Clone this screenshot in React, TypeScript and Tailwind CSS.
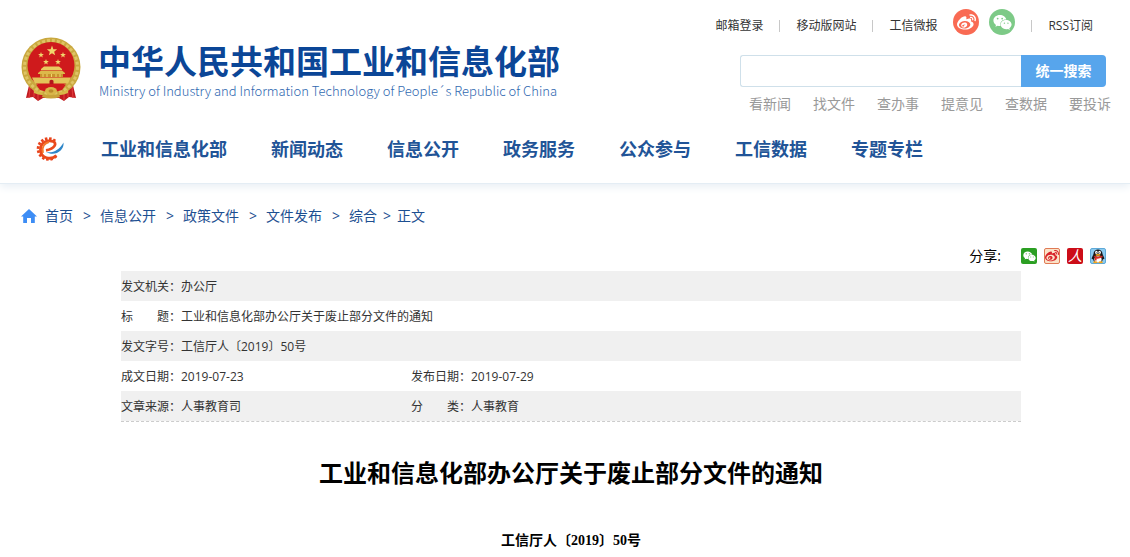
import React from 'react';
import { FaWeibo, FaWeixin } from 'react-icons/fa';

const navItems = ['工业和信息化部', '新闻动态', '信息公开', '政务服务', '公众参与', '工信数据', '专题专栏'];
const quickLinks = ['看新闻', '找文件', '查办事', '提意见', '查数据', '要投诉'];
const crumbs = ['首页', '信息公开', '政策文件', '文件发布', '综合'];

const metaRows = [
  [['发文机关：', '办公厅']],
  [['标　　题：', '工业和信息化部办公厅关于废止部分文件的通知']],
  [['发文字号：', '工信厅人〔2019〕50号']],
  [['成文日期：', '2019-07-23'], ['发布日期：', '2019-07-29']],
  [['文章来源：', '人事教育司'], ['分　　类：', '人事教育']],
];

const starPoints = (cx: number, cy: number, r: number) =>
  Array.from({ length: 10 }, (_, i) => {
    const a = (Math.PI / 5) * i - Math.PI / 2;
    const d = i % 2 === 0 ? r : r * 0.42;
    return `${(cx + d * Math.cos(a)).toFixed(2)},${(cy + d * Math.sin(a)).toFixed(2)}`;
  }).join(' ');

const Emblem = () => (
  <svg viewBox="0 0 60 66" className="h-[66px] w-[60px] shrink-0" aria-hidden="true">
    <path d="M9 44 L5 61 L12 60 L17 64 L22 61 H38 L43 64 L48 60 L55 61 L51 44 Z" fill="#c01a20" />
    <path d="M9 50 L8 61 M13 52 L13 60 M17 54 L17 63 M43 54 L43 63 M47 52 L47 60 M51 50 L52 61" stroke="#e0393a" strokeWidth="1.2" />
    <circle cx="30" cy="30" r="29.5" fill="#c9a83f" />
    <circle cx="30" cy="30" r="26.500" fill="none" stroke="#dfc465" strokeWidth="3" strokeDasharray="3 2" />
    <circle cx="30" cy="28.500" r="23.500" fill="#cf1a1c" />
    <polygon points={starPoints(31, 14, 5.4)} fill="#f1d56c" />
    <polygon points={starPoints(20, 18, 3)} fill="#f1d56c" />
    <polygon points={starPoints(42, 18, 3)} fill="#f1d56c" />
    <polygon points={starPoints(25, 25, 3)} fill="#f1d56c" />
    <polygon points={starPoints(37, 25, 3)} fill="#f1d56c" />
    <path d="M20 32 L23 29.5 H38 L41 32 V33 H20 Z" fill="#e8ca60" />
    <path d="M17 36 L20 33.6 H41 L44 36 V37 H17 Z" fill="#dcb94a" />
    <rect x="19" y="37" width="23" height="3" fill="#c8932c" />
    <path d="M22 37 V40 M26 37 V40 M30.500 37 V40 M35 37 V40 M39 37 V40" stroke="#f1d56c" strokeWidth="1" />
    <path d="M11 40.500 H50 L47 46.500 H14 Z" fill="#e3c459" />
    <path d="M28.500 47 V43.800 Q30.500 41.500 32.500 43.800 V47 Z" fill="#b3161b" />
    <path d="M15 47.500 Q30 52 45 47.500 L41 53 Q30 57 19 53 Z" fill="#cf1a1c" />
    <ellipse cx="30" cy="54" rx="6" ry="4" fill="#d8b649" />
    <ellipse cx="30" cy="54" rx="2.500" ry="1.800" fill="#b98a2c" />
    <path d="M21 55 Q16 55 13 52 V56 Q17 58 22 58 Z M39 55 Q44 55 47 52 V56 Q43 58 38 58 Z" fill="#d8b649" />
    <path d="M22 57 Q30 60 38 57 L39 60 Q30 63 21 60 Z" fill="#c9a23a" />
  </svg>
);

// teeth run clockwise from the lower right round to the upper right
const teeth = Array.from({ length: 12 }, (_, i) => 50 + i * 23);

const GearLogo = () => (
  <svg viewBox="0 0 30 26" className="h-[26px] w-[30px]" aria-hidden="true">
    {teeth.map(deg => (
      <rect key={deg} x="22.500" y="11.700" width="2.800" height="2.600" fill="#e8431c" transform={`rotate(${deg} 13.500 13)`} />
    ))}
    <path
      d="M21.500 19.500 C16 24.500 5.500 22.500 5.500 13.500 C5.500 6 13 3.800 17.800 5.300 C22.500 7 20 12.800 11 14.300"
      fill="none"
      stroke="#ea4a1b"
      strokeWidth="2.800"
    />
    <path d="M8 17 C6.500 11 9.500 7 14 6" fill="none" stroke="#f47a2b" strokeWidth="1.800" />
    <path d="M11 16 C17.500 17.600 24.500 14 28.500 6.500 C29.500 14.800 19.500 21 11 16 Z" fill="#2e86c8" />
  </svg>
);

const HomeIcon = () => (
  <svg viewBox="0 0 16 14" className="h-[14px] w-4" aria-hidden="true">
    <path d="M8 0 L16 7.600 H13.800 V14 H10 V9 H6 V14 H2.200 V7.600 H0 Z" fill="#3d8df5" />
  </svg>
);

const Penguin = () => (
  <svg viewBox="0 0 16 16" className="size-4" aria-hidden="true">
    <rect x="0.500" y="0.500" width="15" height="15" rx="1.500" fill="#8ccbf0" stroke="#5ea9d8" />
    <path d="M3.500 6 C3.500 0 12.500 0 12.500 6 L14.500 10.500 L12.800 11.500 C12.500 16 3.500 16 3.200 11.500 L1.500 10.500 Z" fill="#17171b" />
    <ellipse cx="8" cy="11.500" rx="3.600" ry="3.200" fill="#fff" />
    <ellipse cx="6.400" cy="4.400" rx="1.300" ry="1.600" fill="#fff" />
    <ellipse cx="9.600" cy="4.400" rx="1.300" ry="1.600" fill="#fff" />
    <circle cx="6.800" cy="4.700" r="0.500" fill="#111" />
    <circle cx="9.200" cy="4.700" r="0.500" fill="#111" />
    <ellipse cx="8" cy="6.900" rx="2.600" ry="0.900" fill="#f6a71b" />
    <path d="M3.500 7.600 Q8 9.800 12.500 7.600 V9.200 Q8 11.200 6.600 10.400 V12.500 H4.800 V9.600 Z" fill="#dd2a22" />
    <ellipse cx="5.300" cy="14.300" rx="2.200" ry="1" fill="#f6a71b" />
    <ellipse cx="10.700" cy="14.300" rx="2.200" ry="1" fill="#f6a71b" />
  </svg>
);

const Divider = () => <span className="h-3 w-px bg-[#c8c8c8]" />;

const TopLinks = () => (
  <div className="flex h-[26px] items-center gap-4 pr-[37px] text-xs text-[#333]">
    <a href="#mail">邮箱登录</a>
    <Divider />
    <a href="#mobile">移动版网站</a>
    <Divider />
    <a href="#weibao">工信微报</a>
    <div className="-mt-1 flex items-center gap-[10px] self-start">
      <a href="#weibo" aria-label="微博" className="flex size-[26px] items-center justify-center rounded-full bg-[#f96a53] text-white">
        <FaWeibo size={19} />
      </a>
      <a href="#weixin" aria-label="微信" className="flex size-[26px] items-center justify-center rounded-full bg-[#7dca87] text-white">
        <FaWeixin size={19} />
      </a>
    </div>
    <Divider />
    <a href="#rss">RSS订阅</a>
  </div>
);

const SearchBox = () => (
  <form className="flex h-8 w-[366px]" onSubmit={e => e.preventDefault()}>
    <input
      type="text"
      aria-label="搜索"
      className="min-w-0 flex-1 rounded-l-[3px] border border-r-0 border-[#cfe0ea] bg-white px-2 text-sm outline-none"
    />
    <button type="submit" className="w-[85px] rounded-r-[4px] bg-[#57a5ec] text-sm font-bold text-white">
      统一搜索
    </button>
  </form>
);

const Header = () => (
  <header className="border-b border-[#e4edf4] shadow-[0_3px_8px_#e9eff5]">
    <div className="flex items-start justify-between pl-[21px]">
      <a href="#home" className="flex items-start gap-[17px] pt-[37px]">
        <Emblem />
        <div className="pt-1">
          <div className="text-[33px] leading-[42px] font-bold whitespace-nowrap text-[#0b4697]">中华人民共和国工业和信息化部</div>
          <div className="pl-px font-[family-name:'Noto_Sans_CJK_SC',sans-serif] text-[13px] leading-4 font-light whitespace-nowrap text-[#2f68b0]">
            Ministry of Industry and Information Technology of People´s Republic of China
          </div>
        </div>
      </a>
      <div className="flex shrink-0 flex-col items-end pt-[13px]">
        <TopLinks />
        <div className="w-[390px] pt-4">
          <SearchBox />
          <div className="flex gap-[22px] pt-[7px] pl-[9px] text-sm whitespace-nowrap text-[#999]">
            {quickLinks.map(link => (
              <a key={link} href="#quick">{link}</a>
            ))}
          </div>
        </div>
      </div>
    </div>
    <nav className="flex items-center pt-[21px] pb-[20px] pl-[35px]">
      <a href="#logo" aria-label="首页" className="mr-9"><GearLogo /></a>
      <div className="flex gap-[44px] text-lg font-bold whitespace-nowrap text-[#215497]">
        {navItems.map(item => (
          <a key={item} href="#nav">{item}</a>
        ))}
      </div>
    </nav>
  </header>
);

const Breadcrumb = () => (
  <nav aria-label="当前位置" className="flex items-center pl-[21px] text-sm text-[#1d4f91]">
    <HomeIcon />
    <div className="flex pl-2">
      {crumbs.map((crumb, i) => (
        <React.Fragment key={crumb}>
          <a href="#crumb">{crumb}</a>
          <span className={i === crumbs.length - 1 ? 'px-[6px]' : 'pr-[9px] pl-[10px]'}>&gt;</span>
        </React.Fragment>
      ))}
      <span>正文</span>
    </div>
  </nav>
);

const Share = () => (
  <div className="flex items-center justify-end pr-6 text-sm text-black">
    <span>分享:</span>
    <div className="flex gap-[7px] pl-5">
      <a href="#share-weixin" aria-label="微信" className="flex size-4 items-center justify-center rounded-[2px] bg-[#2b9f23] text-white">
        <FaWeixin size={13} />
      </a>
      <a href="#share-weibo" aria-label="新浪微博" className="flex size-4 items-center justify-center rounded-[2px] border border-[#e07a55] bg-[#fbe3c8] text-[#d8232a]">
        <FaWeibo size={14} />
      </a>
      <a href="#share-people" className="flex size-4 items-center justify-center rounded-[2px] bg-[#cc0d18] text-sm text-white italic">人</a>
      <a href="#share-qq" aria-label="QQ"><Penguin /></a>
    </div>
  </div>
);

const MetaTable = () => (
  <div className="border-b border-dashed border-[#ccc]">
    <table className="w-full table-fixed text-left text-xs text-[#333]">
      <colgroup>
        <col className="w-[60px]" />
        <col className="w-[230px]" />
        <col className="w-[60px]" />
        <col />
      </colgroup>
      <tbody>
        {metaRows.map(row => (
          <tr key={row[0][0]} className="h-[30px] odd:bg-[#f0f0f0]">
            {row.map(([label, value]) => (
              <React.Fragment key={label}>
                <th scope="row" className="pt-[2px] font-normal whitespace-nowrap">{label}</th>
                <td colSpan={row.length === 1 ? 3 : 1} className="pt-[2px] whitespace-nowrap">{value}</td>
              </React.Fragment>
            ))}
          </tr>
        ))}
      </tbody>
    </table>
  </div>
);

export default function App() {
  return (
    <div lang="zh-CN" className="min-h-screen bg-white font-[family-name:'Open_Sans','Noto_Sans_CJK_SC',sans-serif]">
      <Header />
      <main className="pt-[22px]">
        <Breadcrumb />
        <div className="pt-5">
          <Share />
        </div>
        <div className="pt-[5px] pr-[9px] pl-[21px]">
          <article className="mx-auto max-w-[900px]">
            <MetaTable />
            <h1 className="pt-[35px] text-center text-2xl leading-8 font-bold text-black">
              工业和信息化部办公厅关于废止部分文件的通知
            </h1>
            <p className="pt-[42px] text-center font-[family-name:'Liberation_Serif','Noto_Sans_CJK_SC',serif] text-sm font-bold text-black">
              工信厅人〔2019〕50号
            </p>
          </article>
        </div>
      </main>
    </div>
  );
}
